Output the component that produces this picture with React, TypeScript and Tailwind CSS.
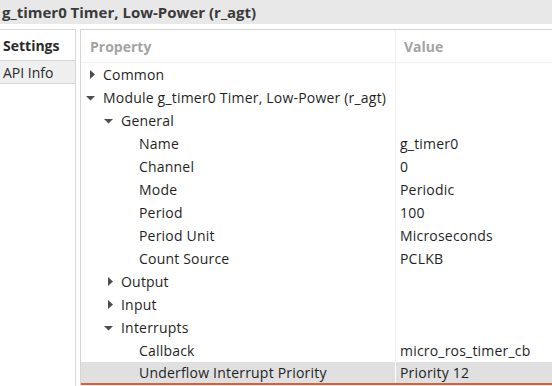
import React from "react";

type Row = { label: string; value?: string; level: number; tri?: "right" | "down"; selected?: boolean };

const rows: Row[] = [
  { label: "Common", level: 0, tri: "right" },
  { label: "Module g_timer0 Timer, Low-Power (r_agt)", level: 0, tri: "down" },
  { label: "General", level: 1, tri: "down" },
  { label: "Name", value: "g_timer0", level: 2 },
  { label: "Channel", value: "0", level: 2 },
  { label: "Mode", value: "Periodic", level: 2 },
  { label: "Period", value: "100", level: 2 },
  { label: "Period Unit", value: "Microseconds", level: 2 },
  { label: "Count Source", value: "PCLKB", level: 2 },
  { label: "Output", level: 1, tri: "right" },
  { label: "Input", level: 1, tri: "right" },
  { label: "Interrupts", level: 1, tri: "down" },
  { label: "Callback", value: "micro_ros_timer_cb", level: 2 },
  { label: "Underflow Interrupt Priority", value: "Priority 12", level: 2, selected: true },
];

function Tri({ dir }: { dir: "right" | "down" }) {
  if (dir === "right")
    return (
      <svg width="17" height="23" viewBox="0 0 17 23" className="shrink-0">
        <polygon points="4,7 9,11.5 4,16" fill="#4d4d4d" />
      </svg>
    );
  return (
    <svg width="17" height="23" viewBox="0 0 17 23" className="shrink-0">
      <polygon points="0,10 9,10 4.5,14.5" fill="#4d4d4d" />
    </svg>
  );
}

export default function App() {
  return (
    <div
      className="w-[552px] h-[386px] overflow-hidden bg-white flex flex-col text-[14px] text-[#1f1f1f]"
      style={{ fontFamily: '"Open Sans", "DejaVu Sans", sans-serif' }}
    >
      <div className="h-[24px] bg-[#e8e8e8] flex items-center pl-[2px] text-[15px] font-bold text-[#3a3a3a] shrink-0">
        g_timer0 Timer, Low-Power (r_agt)
      </div>
      <div className="flex flex-1 pt-[5px] min-h-0">
        <div className="w-[76px] shrink-0 border-r border-[#d6d6d6] flex flex-col">
          <div className="h-[31px] border-t border-[#dcdcdc] flex items-center pl-[3px] font-bold text-[#2a2a2a]">
            Settings
          </div>
          <div className="h-[24px] bg-[#efefef] border-t border-b border-[#d8d8d8] flex items-center pl-[3px] text-[#2a2a2a]">
            API Info
          </div>
        </div>
        <div className="w-[4px] shrink-0" />
        <div className="flex-1 border-l border-t border-[#d4d4d4] flex flex-col min-w-0">
          <div className="h-[33px] shrink-0 flex border-b border-[#efefef] font-bold text-[#a3a3a3]">
            <div className="w-[315px] flex items-center pl-[9px] border-r border-[#f0f0f0]">Property</div>
            <div className="flex-1 flex items-center pl-[8px]">Value</div>
          </div>
          {rows.map((r, i) => (
            <div
              key={i}
              className={
                "h-[23px] shrink-0 flex tracking-[0.2px] " +
                (r.selected ? "bg-[#e0e0e0] border-b-2 border-[#e65a2c]" : "")
              }
            >
              <div
                className={
                  "w-[315px] flex items-center whitespace-nowrap border-r " +
                  (r.selected ? "border-white" : "border-[#f0f0f0]")
                }
                style={{ paddingLeft: 5 + r.level * 18 }}
              >
                {r.tri ? <Tri dir={r.tri} /> : <span className="w-[17px] shrink-0" />}
                <span className="leading-[23px]">{r.label}</span>
              </div>
              <div className="flex-1 flex items-center pl-[4px] whitespace-nowrap">{r.value ?? ""}</div>
            </div>
          ))}
        </div>
      </div>
    </div>
  );
}
